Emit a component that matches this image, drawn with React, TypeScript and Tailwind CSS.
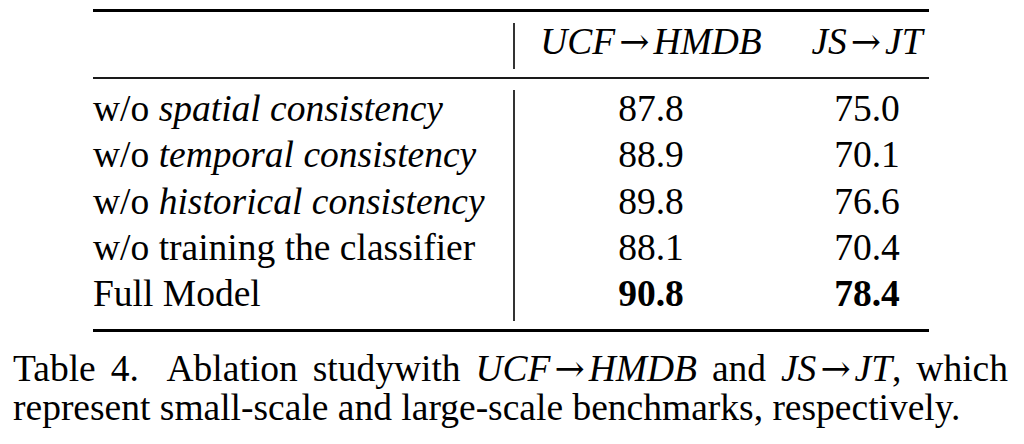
import React from "react";

const serif = { fontFamily: '"Liberation Serif", "Times New Roman", serif' };

function Arrow() {
  return (
    <span
      className="not-italic font-normal inline-block mx-[4px] text-[36px]"
      style={{ fontFamily: '"DejaVu Serif", "DejaVu Sans", serif' }}
    >
      →
    </span>
  );
}

const rows: { label: React.ReactNode; a: string; b: string; bold?: boolean }[] = [
  { label: <>w/o <i>spatial consistency</i></>, a: "87.8", b: "75.0" },
  { label: <>w/o <i>temporal consistency</i></>, a: "88.9", b: "70.1" },
  { label: <>w/o <i>historical consistency</i></>, a: "89.8", b: "76.6" },
  { label: <>w/o training the classifier</>, a: "88.1", b: "70.4" },
  { label: <>Full Model</>, a: "90.8", b: "78.4", bold: true },
];

export default function App() {
  return (
    <div className="w-[1024px] h-[444px] bg-white text-black overflow-hidden pt-[9px]" style={serif}>
      <div className="ml-[93px] w-[836px] text-[37.5px]">
        <div className="h-[3px] bg-black" />
        {/* header */}
        <div className="flex mt-[7px] leading-[46px] h-[46px]">
          <div className="w-[420px]" />
          <div className="w-[2px] bg-[#333] mt-[4px] -mb-[4px]" />
          <div className="w-[272px] text-center italic whitespace-nowrap">UCF<Arrow />HMDB</div>
          <div className="w-[142px] pl-[18px] text-center italic whitespace-nowrap">JS<Arrow />JT</div>
        </div>
        <div className="h-[2px] bg-[#1a1a1a] mt-[12px]" />
        {/* body */}
        <div className="flex mt-[7px] leading-[46.25px]">
          <div className="w-[420px] flex flex-col">
            {rows.map((r, i) => (
              <div key={i} className="whitespace-nowrap">{r.label}</div>
            ))}
          </div>
          <div className="w-[2px] bg-[#333] mt-[4px] -mb-[4px]" />
          <div className="w-[272px] flex flex-col text-center">
            {rows.map((r, i) => (
              <div key={i} className={r.bold ? "font-bold" : ""}>{r.a}</div>
            ))}
          </div>
          <div className="w-[142px] pl-[18px] flex flex-col text-center">
            {rows.map((r, i) => (
              <div key={i} className={r.bold ? "font-bold" : ""}>{r.b}</div>
            ))}
          </div>
        </div>
        <div className="h-[3px] bg-black mt-[12px]" />
      </div>
      <p className="ml-[13px] w-[995px] mt-[18px] text-[37.5px] leading-[38.3px] text-justify">
        Table 4.&nbsp; Ablation studywith <i>UCF</i><Arrow /><i>HMDB</i> and <i>JS</i><Arrow /><i>JT</i>, which represent small-scale and large-scale benchmarks, respectively.
      </p>
    </div>
  );
}
